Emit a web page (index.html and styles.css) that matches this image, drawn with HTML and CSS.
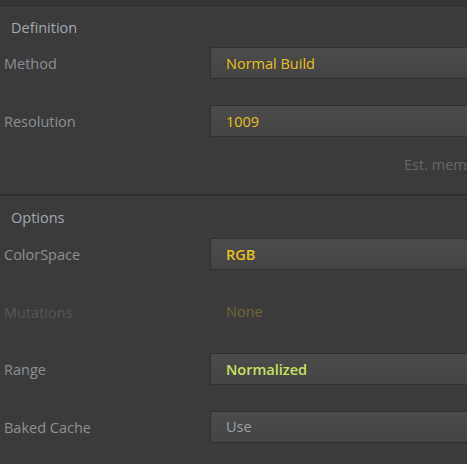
FILE: index.html
```
<!DOCTYPE html>
<html>
<head>
<meta charset="utf-8">
<link rel="stylesheet" href="styles.css">
</head>
<body>
<div class="panel">
  <div class="topbar"></div>
  <section class="section">
    <div class="heading">Definition</div>
    <div class="rows">
      <div class="row">
        <div class="label">Method</div>
        <div class="field"><span class="val yellow">Normal Build</span></div>
      </div>
      <div class="row">
        <div class="label">Resolution</div>
        <div class="field"><span class="val yellow">1009</span></div>
      </div>
    </div>
    <div class="note">Est. memory</div>
  </section>
  <div class="divider"></div>
  <section class="section">
    <div class="heading">Options</div>
    <div class="rows rows2">
      <div class="row">
        <div class="label">ColorSpace</div>
        <div class="field"><span class="val yellow bold">RGB</span></div>
      </div>
      <div class="row">
        <div class="label disabled">Mutations</div>
        <div class="field flat"><span class="val olive">None</span></div>
      </div>
      <div class="row">
        <div class="label">Range</div>
        <div class="field"><span class="val green bold">Normalized</span></div>
      </div>
      <div class="row">
        <div class="label">Baked Cache</div>
        <div class="field"><span class="val gray">Use</span></div>
      </div>
    </div>
  </section>
</div>
</body>
</html>
```
FILE: styles.css
```
html, body {
  margin: 0;
  padding: 0;
  background: #3b3b3b;
  overflow: hidden;
}
body {
  width: 467px;
  height: 464px;
  font-family: "Open Sans", "Noto Sans", sans-serif;
  font-size: 14.5px;
}
.panel {
  width: 560px;
}
.topbar {
  height: 5px;
  background: #353535;
  border-bottom: 1px solid #2b2b2b;
}
.section {
  display: flex;
  flex-direction: column;
}
.heading {
  padding: 12px 0 0 11px;
  height: 20px;
  line-height: 20px;
  color: #a2a9b1;
}
.rows {
  display: flex;
  flex-direction: column;
  gap: 26px;
  margin-top: 9px;
}
.rows2 {
  gap: 25.5px;
  margin-top: 10px;
}
.row {
  display: flex;
  align-items: center;
  height: 32px;
}
.label {
  width: 206px;
  padding-left: 4px;
  color: #8c9094;
  padding-top: 1px;
}
.label.disabled {
  color: #53575b;
}
.field {
  flex: 1;
  height: 30px;
  display: flex;
  align-items: center;
  padding-left: 15px;
  background: linear-gradient(#4b4b4b, #444444);
  border: 1px solid #303030;
  border-right: none;
  border-radius: 2px 0 0 2px;
}
.field.flat {
  background: #3c3c3c;
  border-color: #3a3a3a;
}
.val {
  line-height: 20px;
  padding-top: 1px;
}
.yellow { color: #e9c11d; }
.olive { color: #706633; }
.green { color: #c7e25e; }
.gray { color: #9a9fa4; }
.bold { font-weight: 600; }
.note {
  margin-top: 18px;
  height: 20px;
  line-height: 20px;
  padding-left: 404px;
  color: #63676b;
  white-space: nowrap;
}
.divider {
  margin-top: 19px;
  height: 1px;
  background: #2b2b2b;
  border-bottom: 1px solid #333333;
}
```
